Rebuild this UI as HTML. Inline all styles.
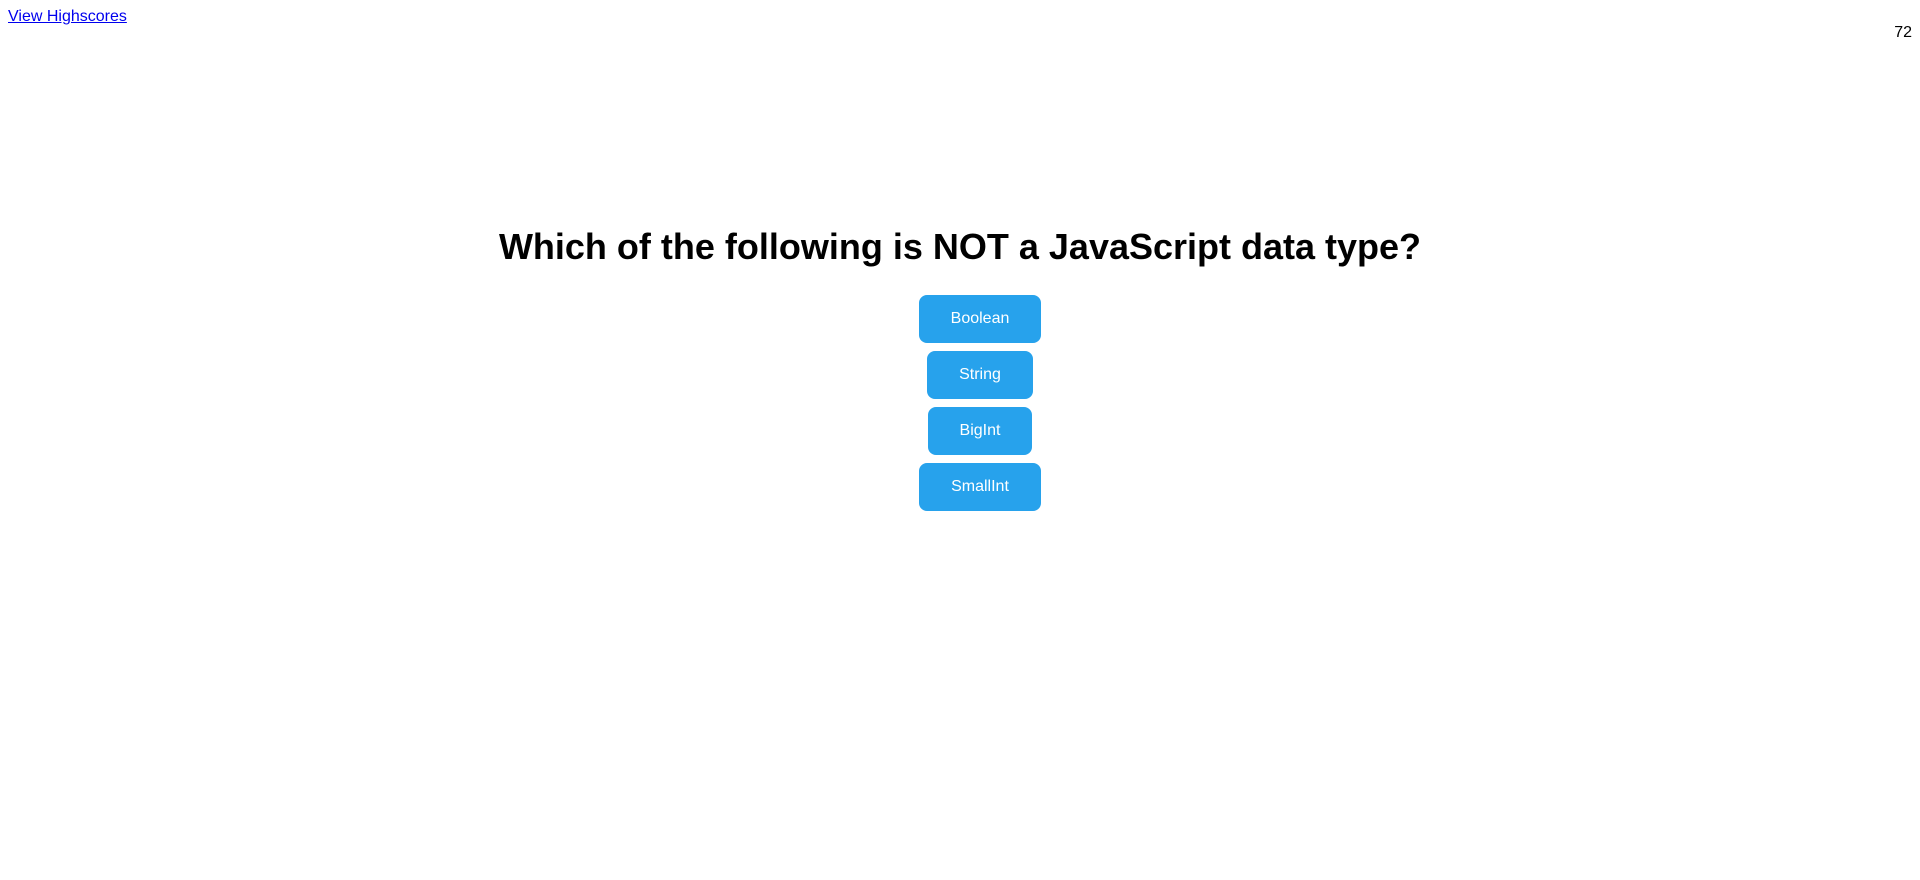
<!DOCTYPE html>
<html><head><style>
body{margin:0;width:1920px;height:880px;background:#fff;font-family:"Liberation Sans",Arial,sans-serif;position:relative;overflow:hidden}
a{position:absolute;left:8px;top:8px;font-size:16px;color:#0000ee;text-decoration:underline}
.t{position:absolute;right:8px;top:24px;font-size:16px;color:#000}
h1{position:absolute;left:0;width:1920px;top:223px;margin:0;text-align:center;font-size:36px;font-weight:bold;line-height:48px}
.b{position:absolute;height:48px;background:#27a2ec;color:#fff;border-radius:8px;font-size:16px;line-height:48px;text-align:center}
</style></head><body>
<a href="#">View Highscores</a>
<div class="t">72</div>
<h1>Which of the following is NOT a JavaScript data type?</h1>
<div class="b" style="left:919px;width:122px;top:295px">Boolean</div>
<div class="b" style="left:927px;width:106px;top:351px">String</div>
<div class="b" style="left:928px;width:104px;top:407px">BigInt</div>
<div class="b" style="left:919px;width:122px;top:463px">SmallInt</div>
</body></html>
